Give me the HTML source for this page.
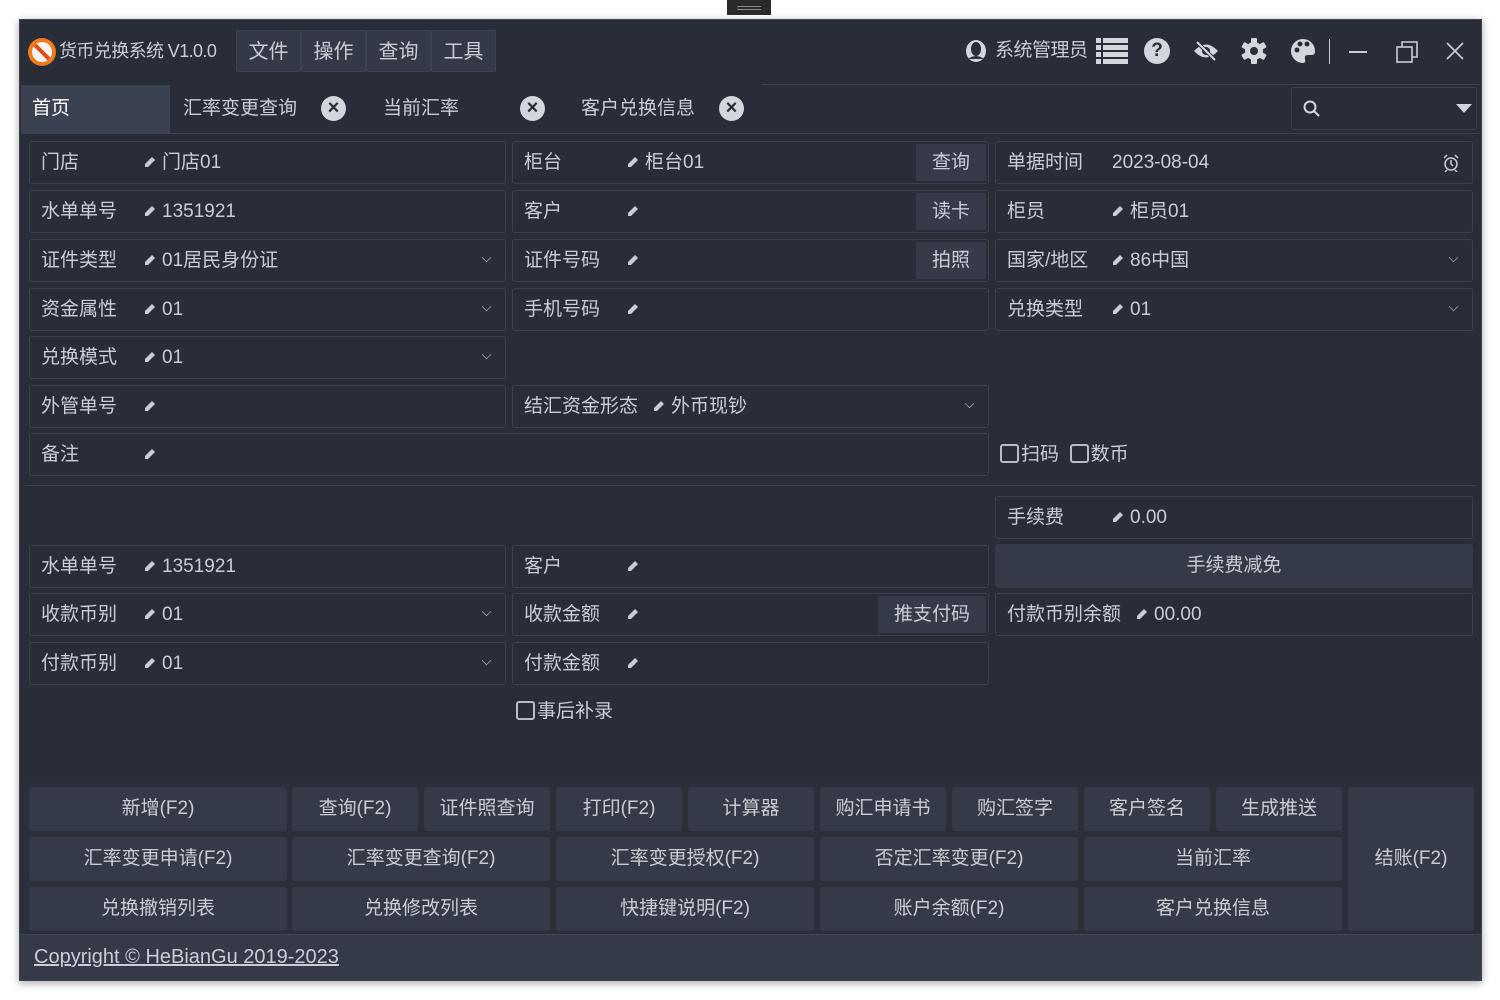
<!DOCTYPE html>
<html><head><meta charset="utf-8"><style>
*{box-sizing:border-box;margin:0;padding:0}
body{width:1500px;height:1000px;background:#fff;position:relative;overflow:hidden;font-family:"Liberation Sans","Noto Sans CJK SC",sans-serif;color:#c9cdd5;font-size:19px}
.a{position:absolute}
.win{left:19px;top:19px;width:1463px;height:962px;background:#282d38;border:1px solid #3e4452;box-shadow:0 2px 8px rgba(0,0,0,.35)}
.f{position:absolute;height:43px;border:1px solid #3b414e;border-radius:3px;background:#282d38}
.f .l,.f .v{position:absolute;top:0;height:41px;line-height:41px;white-space:nowrap}
.f .l{left:11px}
.pen{display:inline-block;width:12px;height:12px;margin-right:6px;vertical-align:0}
.dd{position:absolute;right:14px;top:13px;width:9px;height:9px;border-right:1.5px solid #aab;border-bottom:1.5px solid #aab;transform:rotate(45deg) scale(.75);}
.ib{position:absolute;top:2px;right:2px;height:37px;line-height:37px;background:#353b48;padding:0 16px;border-radius:2px}
.b{position:absolute;height:44px;background:#343a47;border-radius:3px;text-align:center;line-height:44px}
.menu{position:absolute;top:30px;height:42px;background:#333946;border:1px solid #3c4250;border-radius:2px;line-height:42px;text-align:center;width:65px;font-size:20px}
.cb{display:inline-block;width:19px;height:19px;border:2px solid #b8bcc6;border-radius:3px;vertical-align:-3px;margin-right:2px}
.x{position:absolute;top:96px;width:25px;height:25px;border-radius:50%;background:#d3d6dd;color:#282d38;font-size:20px;font-weight:bold;text-align:center;line-height:25px}
.t{position:absolute;top:86px;height:46px;line-height:46px}
</style></head><body>
<div class="a" style="left:727px;top:0;width:44px;height:15px;background:#2a2a2a"><div class="a" style="left:10px;top:6px;width:24px;height:1px;background:#888"></div><div class="a" style="left:10px;top:9px;width:24px;height:1px;background:#888"></div></div>
<div class="a win"></div>
<svg class="a" style="left:27px;top:37px" width="30" height="30" viewBox="0 0 30 30"><circle cx="15" cy="15" r="14" fill="#f07a1a"/><circle cx="15" cy="15" r="10" fill="#f3f3f3"/><path d="M8 8 L22 22" stroke="#e24a1a" stroke-width="4"/></svg>
<div class="a" style="left:59px;top:30px;height:42px;line-height:42px;font-size:18px;letter-spacing:-0.6px">货币兑换系统 V1.0.0</div>
<div class="menu" style="left:236px">文件</div>
<div class="menu" style="left:301px">操作</div>
<div class="menu" style="left:366px">查询</div>
<div class="menu" style="left:431px">工具</div>
<svg class="a" style="left:964px;top:39px" width="24" height="26"><ellipse cx="12" cy="12" rx="10" ry="11" fill="#d3d6dd"/><ellipse cx="12" cy="10" rx="5" ry="7" fill="#282d38"/><path d="M4 20 Q12 14 20 20" fill="#282d38"/></svg>
<div class="a" style="left:995px;top:30px;height:42px;line-height:42px;letter-spacing:-0.5px">系统管理员</div>
<svg class="a" style="left:1096px;top:38px" width="32" height="26" fill="#d3d6dd"><rect x="0" y="0" width="5" height="5"/><rect x="7" y="0" width="25" height="5"/><rect x="0" y="7" width="5" height="5"/><rect x="7" y="7" width="25" height="5"/><rect x="0" y="14" width="5" height="5"/><rect x="7" y="14" width="25" height="5"/><rect x="0" y="21" width="5" height="5"/><rect x="7" y="21" width="25" height="5"/></svg>
<div class="a" style="left:1144px;top:38px;width:26px;height:26px;border-radius:50%;background:#d3d6dd;color:#282d38;font-weight:bold;text-align:center;line-height:26px;font-size:19px">?</div>
<svg class="a" style="left:1192px;top:40px" width="28" height="22"><path d="M2 11 Q14 -2 26 11 Q14 24 2 11Z" fill="#d3d6dd"/><circle cx="14" cy="11" r="4" fill="#282d38"/><path d="M5 2 L23 20" stroke="#282d38" stroke-width="4"/><path d="M5 2 L23 20" stroke="#d3d6dd" stroke-width="2"/></svg>
<svg class="a" style="left:1241px;top:38px" width="26" height="26" viewBox="0 0 26 26"><g fill="#d3d6dd"><circle cx="13" cy="13" r="9"/><rect x="10" y="0" width="6" height="26" rx="1"/><rect x="10" y="0" width="6" height="26" rx="1" transform="rotate(60 13 13)"/><rect x="10" y="0" width="6" height="26" rx="1" transform="rotate(120 13 13)"/></g><circle cx="13" cy="13" r="4" fill="#282d38"/></svg>
<svg class="a" style="left:1290px;top:38px" width="26" height="26"><path d="M13 1 A12 12 0 1 0 13 25 Q16 25 15 21 Q14 17 18 17 L22 17 Q25 17 25 13 A12 12 0 0 0 13 1Z" fill="#d3d6dd"/><circle cx="7" cy="12" r="2.5" fill="#282d38"/><circle cx="10" cy="6" r="2.5" fill="#282d38"/><circle cx="17" cy="6" r="2.5" fill="#282d38"/></svg>
<div class="a" style="left:1329px;top:39px;width:1px;height:25px;background:#c9cdd5"></div>
<div class="a" style="left:1349px;top:51px;width:18px;height:2px;background:#c9cdd5"></div>
<svg class="a" style="left:1396px;top:40px" width="24" height="24" fill="none" stroke="#c9cdd5" stroke-width="1.6"><rect x="1" y="7" width="15" height="15"/><path d="M6 7 V2 H21 V17 H16"/></svg>
<svg class="a" style="left:1446px;top:42px" width="18" height="18" stroke="#c9cdd5" stroke-width="1.6"><path d="M1 1 L17 17 M17 1 L1 17"/></svg>
<div class="a" style="left:21px;top:85px;width:149px;height:48px;background:#3a4150"></div>
<div class="t" style="left:32px;color:#fff">首页</div>
<div class="t" style="left:183px">汇率变更查询</div><div class="x" style="left:321px">×</div>
<div class="t" style="left:383px">当前汇率</div><div class="x" style="left:520px">×</div>
<div class="t" style="left:581px">客户兑换信息</div><div class="x" style="left:719px">×</div>
<div class="a" style="left:762px;top:84px;width:718px;height:1px;background:#3c4250"></div>
<div class="a" style="left:21px;top:133px;width:1459px;height:1px;background:#3c4250"></div>
<div class="a" style="left:1291px;top:87px;width:186px;height:43px;border:1px solid #3b414e;border-radius:3px"></div>
<svg class="a" style="left:1303px;top:100px" width="18" height="18" fill="none" stroke="#d3d6dd" stroke-width="2"><circle cx="7" cy="7" r="5.5"/><path d="M11 11 L16 16"/></svg>
<div class="a" style="left:1456px;top:104px;width:0;height:0;border-left:8px solid transparent;border-right:8px solid transparent;border-top:9px solid #d3d6dd"></div>
<svg width="0" height="0" style="position:absolute"><defs><symbol id="p" viewBox="0 0 12 12"><path d="M8 1 L11 4 L4 11 L1 11 L1 8Z" fill="#c9cdd5"/></symbol></defs></svg>
<div class="f" style="left:29px;top:141px;width:477px"><span class="l">门店</span><span class="v" style="left:114px"><svg class="pen"><use href="#p"/></svg>门店01</span></div>
<div class="f" style="left:512px;top:141px;width:477px"><span class="l">柜台</span><span class="v" style="left:114px"><svg class="pen"><use href="#p"/></svg>柜台01</span><span class="ib">查询</span></div>
<div class="f" style="left:995px;top:141px;width:478px"><span class="l">单据时间</span><span class="v" style="left:116px">2023-08-04</span><svg class="a" style="right:12px;top:12px" width="18" height="18" fill="none" stroke="#c9cdd5" stroke-width="1.5"><circle cx="9" cy="10" r="6"/><path d="M9 6 V10 L11 12 M2 4 L5 1 M16 4 L13 1 M5 16 L3 18 M13 16 L15 18"/></svg></div>
<div class="f" style="left:29px;top:190px;width:477px"><span class="l">水单单号</span><span class="v" style="left:114px"><svg class="pen"><use href="#p"/></svg>1351921</span></div>
<div class="f" style="left:512px;top:190px;width:477px"><span class="l">客户</span><span class="v" style="left:114px"><svg class="pen"><use href="#p"/></svg></span><span class="ib">读卡</span></div>
<div class="f" style="left:995px;top:190px;width:478px"><span class="l">柜员</span><span class="v" style="left:116px"><svg class="pen"><use href="#p"/></svg>柜员01</span></div>
<div class="f" style="left:29px;top:239px;width:477px"><span class="l">证件类型</span><span class="v" style="left:114px"><svg class="pen"><use href="#p"/></svg>01居民身份证</span><span class="dd"></span></div>
<div class="f" style="left:512px;top:239px;width:477px"><span class="l">证件号码</span><span class="v" style="left:114px"><svg class="pen"><use href="#p"/></svg></span><span class="ib">拍照</span></div>
<div class="f" style="left:995px;top:239px;width:478px"><span class="l">国家/地区</span><span class="v" style="left:116px"><svg class="pen"><use href="#p"/></svg>86中国</span><span class="dd"></span></div>
<div class="f" style="left:29px;top:288px;width:477px"><span class="l">资金属性</span><span class="v" style="left:114px"><svg class="pen"><use href="#p"/></svg>01</span><span class="dd"></span></div>
<div class="f" style="left:512px;top:288px;width:477px"><span class="l">手机号码</span><span class="v" style="left:114px"><svg class="pen"><use href="#p"/></svg></span></div>
<div class="f" style="left:995px;top:288px;width:478px"><span class="l">兑换类型</span><span class="v" style="left:116px"><svg class="pen"><use href="#p"/></svg>01</span><span class="dd"></span></div>
<div class="f" style="left:29px;top:336px;width:477px"><span class="l">兑换模式</span><span class="v" style="left:114px"><svg class="pen"><use href="#p"/></svg>01</span><span class="dd"></span></div>
<div class="f" style="left:29px;top:385px;width:477px"><span class="l">外管单号</span><span class="v" style="left:114px"><svg class="pen"><use href="#p"/></svg></span></div>
<div class="f" style="left:512px;top:385px;width:477px"><span class="l">结汇资金形态</span><span class="v" style="left:140px"><svg class="pen"><use href="#p"/></svg>外币现钞</span><span class="dd"></span></div>
<div class="f" style="left:29px;top:433px;width:960px"><span class="l">备注</span><span class="v" style="left:114px"><svg class="pen"><use href="#p"/></svg></span></div>
<div class="a" style="left:1000px;top:433px;height:43px;line-height:43px"><span class="cb"></span>扫码 &nbsp;<span class="cb"></span>数币</div>
<div class="a" style="left:25px;top:485px;width:1451px;height:1px;background:#3c4250"></div>
<div class="f" style="left:995px;top:496px;width:478px"><span class="l">手续费</span><span class="v" style="left:116px"><svg class="pen"><use href="#p"/></svg>0.00</span></div>
<div class="f" style="left:29px;top:545px;width:477px"><span class="l">水单单号</span><span class="v" style="left:114px"><svg class="pen"><use href="#p"/></svg>1351921</span></div>
<div class="f" style="left:512px;top:545px;width:477px"><span class="l">客户</span><span class="v" style="left:114px"><svg class="pen"><use href="#p"/></svg></span></div>
<div class="b" style="left:995px;top:544px;width:478px">手续费减免</div>
<div class="f" style="left:29px;top:593px;width:477px"><span class="l">收款币别</span><span class="v" style="left:114px"><svg class="pen"><use href="#p"/></svg>01</span><span class="dd"></span></div>
<div class="f" style="left:512px;top:593px;width:477px"><span class="l">收款金额</span><span class="v" style="left:114px"><svg class="pen"><use href="#p"/></svg></span><span class="ib">推支付码</span></div>
<div class="f" style="left:995px;top:593px;width:478px"><span class="l">付款币别余额</span><span class="v" style="left:140px"><svg class="pen"><use href="#p"/></svg>00.00</span></div>
<div class="f" style="left:29px;top:642px;width:477px"><span class="l">付款币别</span><span class="v" style="left:114px"><svg class="pen"><use href="#p"/></svg>01</span><span class="dd"></span></div>
<div class="f" style="left:512px;top:642px;width:477px"><span class="l">付款金额</span><span class="v" style="left:114px"><svg class="pen"><use href="#p"/></svg></span></div>
<div class="a" style="left:516px;top:690px;height:43px;line-height:43px"><span class="cb"></span>事后补录</div>
<div class="a" style="left:23px;top:781px;width:1455px;height:154px;background:#2a2f3a"></div>
<div class="b" style="left:29px;top:787px;width:258px">新增(F2)</div>
<div class="b" style="left:292px;top:787px;width:126px">查询(F2)</div>
<div class="b" style="left:424px;top:787px;width:126px">证件照查询</div>
<div class="b" style="left:556px;top:787px;width:126px">打印(F2)</div>
<div class="b" style="left:688px;top:787px;width:126px">计算器</div>
<div class="b" style="left:820px;top:787px;width:126px">购汇申请书</div>
<div class="b" style="left:952px;top:787px;width:126px">购汇签字</div>
<div class="b" style="left:1084px;top:787px;width:126px">客户签名</div>
<div class="b" style="left:1216px;top:787px;width:126px">生成推送</div>
<div class="b" style="left:1348px;top:787px;width:126px;height:144px;line-height:144px">结账(F2)</div>
<div class="b" style="left:29px;top:837px;width:258px">汇率变更申请(F2)</div>
<div class="b" style="left:292px;top:837px;width:258px">汇率变更查询(F2)</div>
<div class="b" style="left:556px;top:837px;width:258px">汇率变更授权(F2)</div>
<div class="b" style="left:820px;top:837px;width:258px">否定汇率变更(F2)</div>
<div class="b" style="left:1084px;top:837px;width:258px">当前汇率</div>
<div class="b" style="left:29px;top:887px;width:258px">兑换撤销列表</div>
<div class="b" style="left:292px;top:887px;width:258px">兑换修改列表</div>
<div class="b" style="left:556px;top:887px;width:258px">快捷键说明(F2)</div>
<div class="b" style="left:820px;top:887px;width:258px">账户余额(F2)</div>
<div class="b" style="left:1084px;top:887px;width:258px">客户兑换信息</div>
<div class="a" style="left:20px;top:934px;width:1461px;height:46px;background:#343a47;border-top:1px solid #3e4452"></div>
<div class="a" style="left:34px;top:935px;height:44px;line-height:44px;font-size:20px;text-decoration:underline">Copyright © HeBianGu 2019-2023</div>
</body></html>
